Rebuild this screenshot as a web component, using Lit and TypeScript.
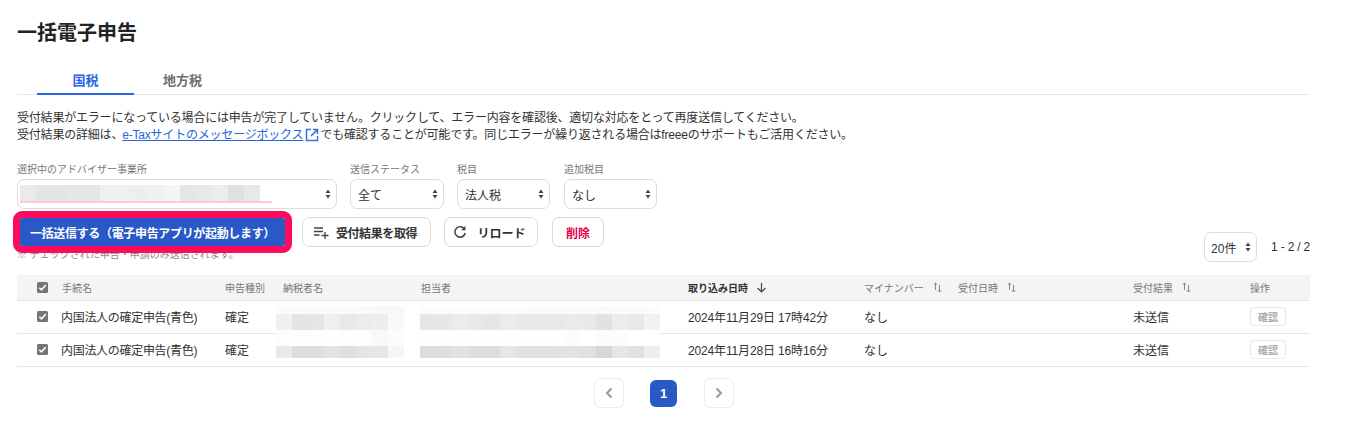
import { LitElement, html, css, svg } from "lit";
import { customElement } from "lit/decorators.js";

const h = (s: string) => s.split(" ").map(x => parseInt(x, 16));
const band1 = h("fb fb fb fb fb fa f8 f8 ff fc fc fc fc fc fc fc fb fb fb fb fa fb fb fc");
const band2 = h("f0 e4 e5 ef e8 ec ee f9 ff e6 e7 ec e8 e6 ec e8 e8 e8 ea e9 e2 ec e8 f2");
const band3 = h("fd fe fe fe fd fd f8 fc ff fe fe fe fe fe fe fe fe fe fc ff fc fc ff ff");
const band4 = h("e9 dd dd e3 df e5 e6 f6 ff dd de e2 dd dd e6 e0 e0 e2 e3 e0 d7 e6 e2 ee");
const selBlocks = h("ea e4 e4 e6 e6 ef ef ee f0 f5 e6 e8 ec e0 e8");

const cells = (vals: number[]) => vals.map(v => html`<i style="background:rgb(${v},${v},${v})"></i>`);

const ext = svg`<path d="M6 1.500H1.500V12.500H12.500V8M8 1.500h4.500V6M12.500 1.500 6 8" fill="none" stroke="currentColor" stroke-width="1.500"/>`;

@customElement("app-root")
export class AppRoot extends LitElement {
  static styles = css`
    :host { display: block; width: 1353px; height: 430px; overflow: hidden; background: #fff; color: #323232;
      font-family: "Liberation Sans", "Noto Sans CJK JP", sans-serif; font-size: 12px; }
    .page { padding: 22px 43px 0 17px; }
    h1 { margin: 0; font-size: 20px; line-height: 22px; font-weight: 700; color: #222; }
    .tabs { display: flex; margin-top: 26px; padding-left: 20px; height: 24px; border-bottom: 1px solid #e8e8e8; }
    .tab { width: 97px; box-sizing: border-box; text-align: center; font-size: 13px; line-height: 22px; font-weight: 700; color: #6e6e6e; height: 25px; }
    .tab.on { color: #2b66e0; border-bottom: 2px solid #2b66e0; }
    .intro { margin: 15px 0 0; line-height: 17px; font-size: 12px; color: #323232; letter-spacing: -0.2px; }
    .intro a { color: #2864d8; text-decoration: underline; margin-left: -1px; }
    .ext { width: 14px; height: 14px; color: #3a6fdc; vertical-align: -3px; margin: 0 1px 0 2px; }
    .filters { display: flex; margin-top: 17px; }
    .f { margin-right: 13px; }
    .f.last { margin-left: 1px; }
    .f label { display: block; font-size: 10px; line-height: 14px; color: #777; height: 14px; margin: 2px 0; }
    .sel { position: relative; box-sizing: border-box; height: 30px; border: 1px solid #dcdcdc; border-radius: 7px; background: #fff;
      display: flex; align-items: center; padding-left: 7px; font-size: 12px; color: #323232; }
    .w320 { width: 320px; } .w94 { width: 94px; } .w93 { width: 93px; }
    .updown { position: absolute; right: 5px; top: 50%; margin-top: -5px; width: 6px; height: 10px; }
    .blur { position: absolute; left: 2px; top: 5px; display: flex; }
    .blur i { display: block; width: 16px; height: 16px; }
    .pinkline { position: absolute; left: 2px; top: 21px; width: 252px; height: 2px; background: #ffc8d2; }
    .actions { display: flex; align-items: center; margin: 2px 0 0 -4px; height: 42px; position: relative; z-index: 1; }
    .primary-wrap { box-sizing: border-box; width: 279px; height: 42px; border: 7px solid #ff0a5c; border-radius: 9px; flex: none; }
    .primary { box-sizing: border-box; width: 100%; height: 100%; background: #2859c6; border-radius: 2px; color: #fff; font-weight: 700; font-size: 12px; letter-spacing: -0.33px; display: flex; align-items: center; justify-content: center; white-space: nowrap; }
    .btn { box-sizing: border-box; height: 30px; border: 1px solid #d9d9d9; border-radius: 7px; display: flex; align-items: center; justify-content: center; font-size: 12px; font-weight: 700; color: #323232; background: #fff; gap: 9px; flex: none; }
    .b1 { width: 129px; margin-left: 10px; letter-spacing: -0.4px; padding-right: 3px; gap: 7px; }
    .b2 { width: 94px; margin-left: 13px; padding-right: 4px; }
    .b3 { width: 52px; margin-left: 14px; color: #e5004f; }
    .icon { width: 16px; height: 16px; flex: none; color: #444; }
    .notebar { display: flex; justify-content: space-between; height: 22px; }
    .note { font-size: 10px; line-height: 14px; color: #8a8a8a; margin-top: -5px; }
    .pager-top { display: flex; align-items: center; gap: 14px; margin-top: -21px; height: 30px; }
    .pager-top .sel { width: 53px; padding-left: 6px; }
    .count { font-size: 12px; color: #323232; letter-spacing: -0.2px; }
    .table { position: relative; }
    .row { display: grid; grid-template-columns: 45px 163px 58px 138px 267px 176px 94px 175px 117px 60px; align-items: center; border-bottom: 1px solid #e6e6e6; }
    .head { background: #f5f3f4; height: 26px; box-sizing: border-box; font-size: 10px; color: #777; }
    .body { height: 33px; box-sizing: border-box; font-size: 12px; color: #323232; padding-bottom: 2px; }
    .tight { letter-spacing: -0.3px; margin-left: -1px; }
    .date { letter-spacing: -0.15px; }
    .cb { width: 11px; height: 11px; margin-left: 20px; border-radius: 1.500px; background: #757575; display: flex; }
    .cb svg { width: 11px; height: 11px; }
    .th { display: flex; align-items: center; gap: 9px; white-space: nowrap; }
    .th.cur { font-weight: 700; color: #323232; gap: 8px; }
    .sort { width: 9px; height: 11px; color: #888; }
    .down { width: 11px; height: 11px; color: #444; }
    .confirm { width: 36px; height: 19px; box-sizing: border-box; border: 1px solid #e8e8e8; border-radius: 4px; color: #aaa; font-size: 10px; font-weight: 700; display: flex; align-items: center; justify-content: center; }
    .mosaic { position: absolute; left: 259px; top: 31px; display: grid; grid-template-columns: repeat(24, 16px); grid-template-rows: 8px 16px 16px 12px; }
    .mosaic i { display: block; }
    .pager { display: flex; justify-content: center; align-items: center; margin-top: 11px; padding-left: 1px; }
    .pg { box-sizing: border-box; width: 30px; height: 30px; border: 1px solid #ececec; border-radius: 6px; display: flex; align-items: center; justify-content: center; color: #999; }
    .pg svg { width: 8px; height: 12px; }
    .cur-p { width: 27px; height: 27px; margin: 0 27px 0 26px; border: 0; background: #2859c6; color: #fff; font-weight: 700; font-size: 13px; }
  `;

  updown() { return html`<svg class="updown" viewBox="0 0 6 10"><path d="M3 .5 5.500 4H.5zM3 9.500.5 6h5z" fill="#444"/></svg>`; }
  sort() { return html`<svg class="sort" viewBox="0 0 9 11"><path d="M2.500 8V1M.8 2.700 2.500 1 4.200 2.700" fill="none" stroke="currentColor"/><path d="M6.500 3v7M4.800 8.300 6.500 10 8.200 8.300" fill="none" stroke="currentColor"/></svg>`; }
  cb() { return html`<span class="cb"><svg viewBox="0 0 11 11"><path d="M2.300 5.700 4.500 7.900 8.800 3" fill="none" stroke="#fff" stroke-width="1.600"/></svg></span>`; }

  row(date: string) {
    return html`<div class="row body">
      ${this.cb()}
      <span class="tight">内国法人の確定申告(青色)</span>
      <span>確定</span>
      <span></span>
      <span></span>
      <span class="date">${date}</span>
      <span>なし</span>
      <span></span>
      <span>未送信</span>
      <span class="confirm">確認</span>
    </div>`;
  }

  render() {
    return html`<div class="page">
      <h1>一括電子申告</h1>
      <div class="tabs"><div class="tab on">国税</div><div class="tab">地方税</div></div>
      <p class="intro">受付結果がエラーになっている場合には申告が完了していません。クリックして、エラー内容を確認後、適切な対応をとって再度送信してください。<br>受付結果の詳細は、<a>e-Taxサイトのメッセージボックス</a><svg class="ext" viewBox="0 0 14 14">${ext}</svg>でも確認することが可能です。同じエラーが繰り返される場合はfreeeのサポートもご活用ください。</p>
      <div class="filters">
        <div class="f"><label>選択中のアドバイザー事業所</label><div class="sel w320"><div class="blur">${cells(selBlocks)}</div><div class="pinkline"></div>${this.updown()}</div></div>
        <div class="f"><label>送信ステータス</label><div class="sel w94">全て${this.updown()}</div></div>
        <div class="f"><label>税目</label><div class="sel w93">法人税${this.updown()}</div></div>
        <div class="f last"><label>追加税目</label><div class="sel w93">なし${this.updown()}</div></div>
      </div>
      <div class="actions">
        <div class="primary-wrap"><div class="primary">一括送信する（電子申告アプリが起動します）</div></div>
        <div class="btn b1"><svg class="icon" viewBox="0 0 16 16"><path d="M1 4h9M1 7.500h9M1 11h5.500M12 8v7M8.500 11.500h7" fill="none" stroke="currentColor" stroke-width="1.300"/></svg>受付結果を取得</div>
        <div class="btn b2"><svg class="icon" viewBox="0 0 16 16"><path d="M12.700 5.500A5.200 5.200 0 1 0 13.200 9" fill="none" stroke="currentColor" stroke-width="1.600"/><path d="M13.500 1.800v4.500H9z" fill="currentColor"/></svg>リロード</div>
        <div class="btn b3">削除</div>
      </div>
      <div class="notebar">
        <div class="note">※ チェックされた申告・申請のみ送信されます。</div>
        <div class="pager-top"><div class="sel">20件${this.updown()}</div><span class="count">1 - 2 / 2</span></div>
      </div>
      <div class="table">
        <div class="row head">
          ${this.cb()}
          <span>手続名</span><span>申告種別</span><span>納税者名</span><span>担当者</span>
          <span class="th cur">取り込み日時 <svg class="down" viewBox="0 0 11 11"><path d="M5.500 1v9M1.500 6l4 4 4-4" fill="none" stroke="currentColor" stroke-width="1.200"/></svg></span>
          <span class="th">マイナンバー ${this.sort()}</span>
          <span class="th">受付日時 ${this.sort()}</span>
          <span class="th">受付結果 ${this.sort()}</span>
          <span>操作</span>
        </div>
        ${this.row("2024年11月29日 17時42分")}
        ${this.row("2024年11月28日 16時16分")}
        <div class="mosaic">${cells(band1)}${cells(band2)}${cells(band3)}${cells(band4)}</div>
      </div>
      <div class="pager">
        <div class="pg"><svg viewBox="0 0 8 12"><path d="M6.500 1.500 2 6l4.500 4.500" fill="none" stroke="currentColor" stroke-width="2"/></svg></div>
        <div class="pg cur-p">1</div>
        <div class="pg"><svg viewBox="0 0 8 12"><path d="M1.500 1.500 6 6l-4.500 4.500" fill="none" stroke="currentColor" stroke-width="2"/></svg></div>
      </div>
    </div>`;
  }
}
